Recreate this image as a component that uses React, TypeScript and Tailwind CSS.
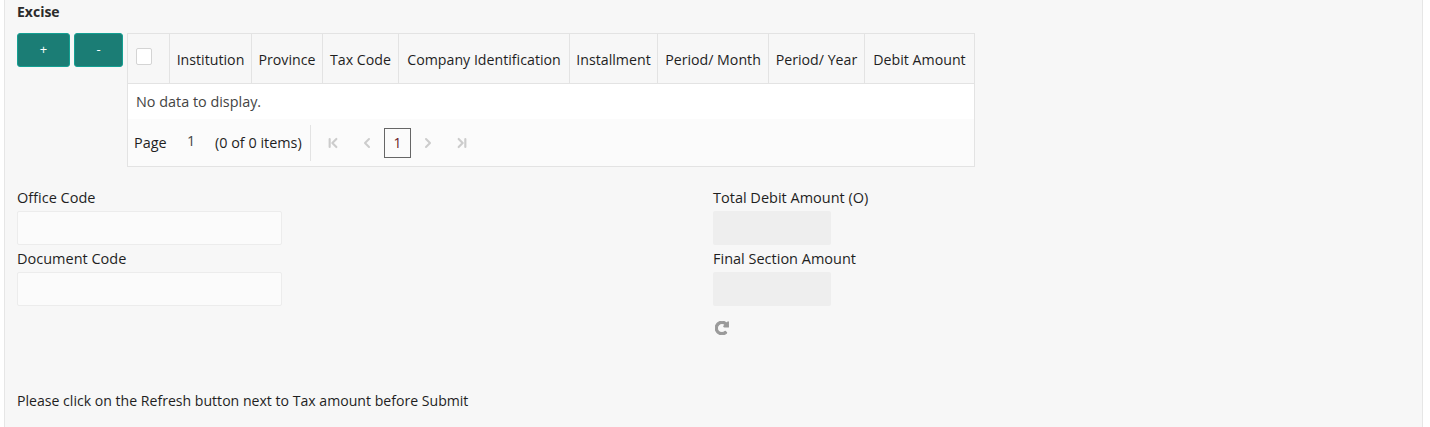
import React from "react";
import { ChevronFirst, ChevronLast, ChevronLeft, ChevronRight } from "lucide-react";
import { FaRedoAlt } from "react-icons/fa";

const columns = [
  { label: "Institution", width: "w-[82px]" },
  { label: "Province", width: "w-[71px]" },
  { label: "Tax Code", width: "w-[76px]" },
  { label: "Company Identification", width: "w-[171px]" },
  { label: "Installment", width: "w-[88px]" },
  { label: "Period/ Month", width: "w-[111px]" },
  { label: "Period/ Year", width: "w-[96px]" },
  { label: "Debit Amount", width: "flex-1" },
];

function Field({ label, muted }: { label: string; muted?: boolean }) {
  return (
    <div className="h-[61px]">
      <div className="h-[24px] pt-[1px] text-[14.5px] leading-[20px] text-[#1f1f1f]">{label}</div>
      {muted ? (
        <div className="h-[34px] w-[118px] rounded-[2px] bg-[#eeeeee]" />
      ) : (
        <div className="h-[34px] w-[265px] rounded-[2px] border border-[#ececec] bg-[#fbfbfb]" />
      )}
    </div>
  );
}

function Pager() {
  return (
    <div className="flex h-[47px] items-center bg-[#fbfbfb] pl-[6px] text-[14.4px] text-[#1f1f1f]">
      <span className="w-[53px]">Page</span>
      <span className="mb-[3px] w-[28px] text-[#444444]">1</span>
      <span className="w-[95px]">(0 of 0 items)</span>
      <div className="h-[36px] w-[1px] bg-[#e3e3e3]" />
      <div className="ml-[14px] flex items-center text-[#cccccc]">
        <ChevronFirst size={16} strokeWidth={3.2} />
        <ChevronLeft size={16} strokeWidth={3} className="ml-[18px]" />
        <div className="ml-[9px] flex h-[30px] w-[27px] items-center justify-center border border-[#666666] text-[14px] text-[#6b1a24]">
          1
        </div>
        <ChevronRight size={16} strokeWidth={3} className="ml-[9px]" />
        <ChevronLast size={16} strokeWidth={3.2} className="ml-[18px]" />
      </div>
    </div>
  );
}

export default function App() {
  return (
    <div className="h-[427px] w-[1430px] overflow-hidden bg-white font-['Open_Sans','Noto_Sans',sans-serif]">
      <div className="ml-[4px] h-[427px] w-[1419px] border-x border-[#e6e6e6] bg-[#f7f7f7] pl-[12px]">
        <h2 className="h-[33px] pt-[3px] text-[14px] leading-[18px] font-bold text-[#2b2b2b]">Excise</h2>

        <div className="flex items-start">
          <button className="h-[34px] w-[53px] rounded-[3px] border border-[#14a093] bg-[#1b7d75] text-[13px] text-white">+</button>
          <button className="ml-[4px] h-[34px] w-[49px] rounded-[3px] border border-[#14a093] bg-[#1b7d75] text-[13px] text-white">-</button>

          <div className="ml-[4px] w-[848px] border border-[#e3e3e3]">
            <div className="flex h-[50px] border-b border-[#e3e3e3] bg-[#f7f7f7] text-[14.2px] text-[#1f1f1f]">
              <div className="w-[42px] shrink-0 border-r border-[#e3e3e3] pl-[8px] pt-[14px]">
                <div className="h-[17px] w-[16px] rounded-[2px] border border-[#d4d4d4] bg-white" />
              </div>
              {columns.map((col) => (
                <div
                  key={col.label}
                  className={`${col.width} flex items-center justify-center whitespace-nowrap border-r border-[#e3e3e3] pt-[2px] last:border-r-0`}
                >
                  {col.label}
                </div>
              ))}
            </div>
            <div className="flex h-[35px] items-center bg-white pl-[8px] text-[14.4px] text-[#444444]">
              No data to display.
            </div>
            <Pager />
          </div>
        </div>

        <div className="mt-[20px] flex">
          <div className="w-[696px]">
            <Field label="Office Code" />
            <Field label="Document Code" />
          </div>
          <div>
            <Field label="Total Debit Amount (O)" muted />
            <Field label="Final Section Amount" muted />
            <FaRedoAlt className="ml-[2px] mt-[12px] text-[14px] text-[#9a9a9a] stroke-[#9a9a9a] stroke-[40px]" />
          </div>
        </div>

        <p className="mt-[56px] text-[14.1px] leading-[20px] text-[#1f1f1f]">
          Please click on the Refresh button next to Tax amount before Submit
        </p>
      </div>
    </div>
  );
}
